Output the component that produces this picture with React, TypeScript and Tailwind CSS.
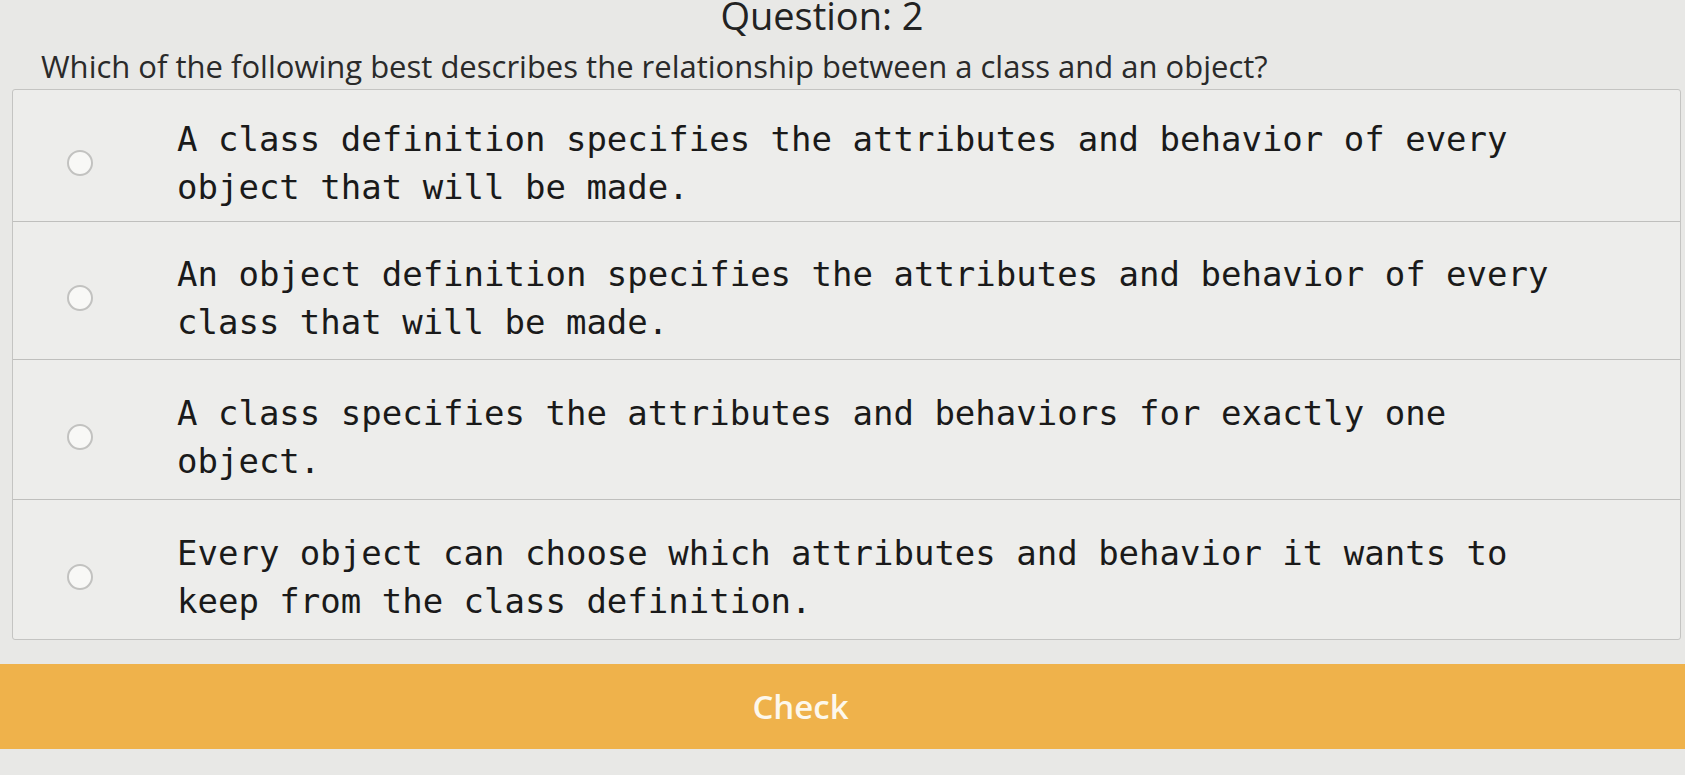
const options = [
  { text: "A class definition specifies the attributes and behavior of every object that will be made.", h: "h-[131px]" },
  { text: "An object definition specifies the attributes and behavior of every class that will be made.", h: "h-[138px]" },
  { text: "A class specifies the attributes and behaviors for exactly one object.", h: "h-[140px]" },
  { text: "Every object can choose which attributes and behavior it wants to keep from the class definition.", h: "h-[140px]" },
]

export default function App() {
  return (
    <div className="h-[775px] w-full overflow-hidden bg-[#e8e8e6] text-[#1c1c1c]">
      {/* Header */}
      <div className="flex justify-center pr-[41px]">
        <h1 className="font-['Open_Sans','Liberation_Sans',sans-serif] text-[38px] leading-[30px] text-[#222]">
          Question: 2
        </h1>
      </div>
      <p className="mt-[19px] pl-[41px] font-['Open_Sans','Liberation_Sans',sans-serif] text-[31px] leading-[34px] text-[#2a2a2a]">
        Which of the following best describes the relationship between a class and an object?
      </p>

      {/* Options */}
      <div className="ml-[12px] mr-[4px] mt-[6px] rounded-[3px] border border-[#c4c4c2] bg-[#ededeb]">
        {options.map((o, i) => (
          <label
            key={i}
            className={
              "flex cursor-pointer items-center pt-[14px] " +
              o.h +
              (i > 0 ? " border-t border-[#bfbfbd]" : "")
            }
          >
            <div className="flex w-[164px] shrink-0 justify-center pr-[30px]">
              <span className="block h-[26px] w-[26px] rounded-full border-2 border-[#c2c2c0] bg-[#f8f8f6]" />
            </div>
            <span className="w-[1400px] font-['DejaVu_Sans_Mono','Liberation_Mono',monospace] text-[34px] leading-[48px] text-[#1a1a1a]">
              {o.text}
            </span>
          </label>
        ))}
      </div>

      {/* Check button */}
      <button className="mt-[24px] flex h-[85px] w-full items-center justify-center bg-[#efb24b] pr-[84px] font-['Open_Sans','Liberation_Sans',sans-serif] text-[33px] font-semibold text-[#fdf8ec]">
        Check
      </button>
    </div>
  )
}
